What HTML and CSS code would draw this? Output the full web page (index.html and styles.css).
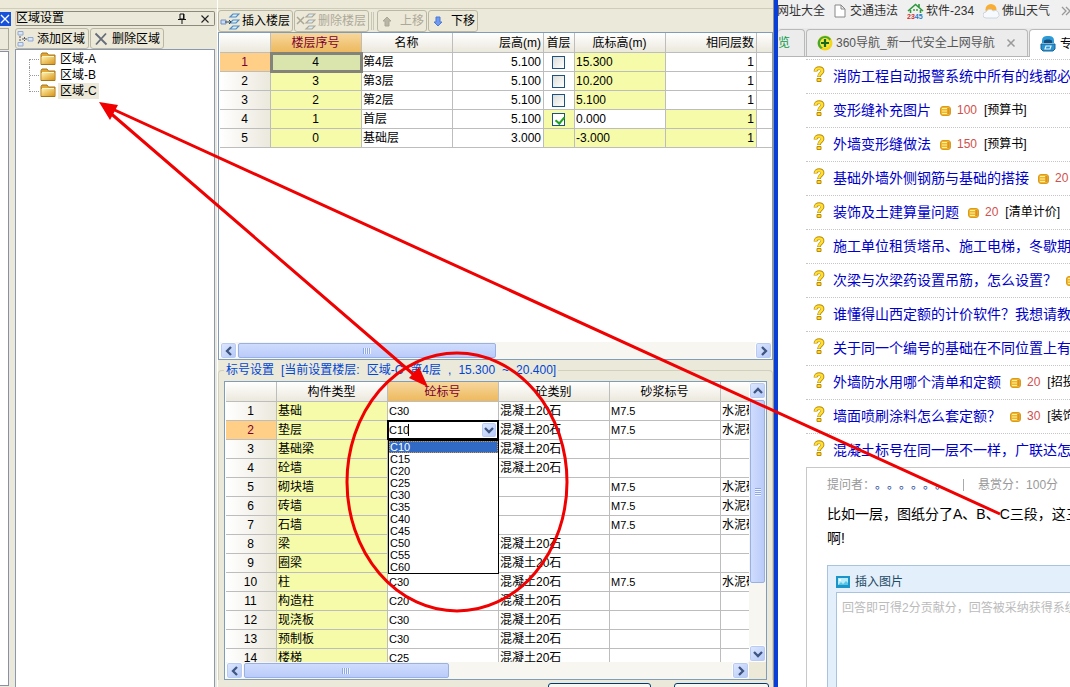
FILE: index.html
```
<!DOCTYPE html>
<html lang="zh-CN">
<head>
<meta charset="utf-8">
<title>区域设置</title>
<link rel="stylesheet" href="styles.css">
</head>
<body>
<svg class="defs" aria-hidden="true">
  <defs>
    <linearGradient id="gold" x1="0" y1="0" x2="1" y2="1"><stop offset="0" stop-color="#fff0a8"/><stop offset="1" stop-color="#d9961c"/></linearGradient>
    <symbol id="folder" viewBox="0 0 16 14"><path d="M1 12.500V2.500L2 1h5l1.500 2H15v9.500z" fill="#e2a737" stroke="#a87518"/><path d="M1.500 5h13v7h-13z" fill="url(#gold)"/><path d="M2 4.500h12" stroke="#fff6c8"/></symbol>
    <symbol id="quest" viewBox="0 0 12 17"><path d="M2.500 5.500C2.500 1 10 1 9.500 5c-.3 2.500-3.500 2.500-3.500 6" fill="none" stroke="#b98a10" stroke-width="3.800"/><path d="M2.500 5C2.500 1.500 9.700 1.500 9.300 5 9 7.500 6 7.500 6 10.500" fill="none" stroke="#ffe02e" stroke-width="2.300"/><path d="M4 12.500h4v3H4z" fill="#ffd820" stroke="#b98a10"/></symbol>
    <symbol id="coin" viewBox="0 0 11 10"><rect x=".5" y=".5" width="10" height="9" rx="2.500" fill="#f2b629" stroke="#d79a22"/><path d="M2 2.500h5M2 5h5M2 7.500h5" stroke="#fff09a"/><path d="M8.500 2v6" stroke="#dc9320" stroke-width="2"/></symbol>
    <symbol id="layers" viewBox="0 0 18 17"><path d="M8 4l3-3h6l-3 3zM8 10l3-3h6l-3 3zM8 16l3-3h6l-3 3z" fill="#d9ecfb" stroke="currentColor" stroke-width="1.200"/></symbol>
    <symbol id="chev" viewBox="0 0 10 10"><path d="M7 1L3 5l4 4" fill="none" stroke="#3f5582" stroke-width="2.300"/></symbol>
  </defs>
</svg>
<div class="desktop">
  <main class="app">
    <div class="strip">
      <button class="strip-close" aria-label="关闭"><svg viewBox="0 0 11 14" width="11" height="14"><path d="M1 3l8 8M9 3l-8 8" stroke="#fff" stroke-width="1.300"/></svg></button>
      <div class="strip-bar"></div>
      <div class="strip-body"></div>
    </div>

    <section class="zones">
      <header class="zones-title">
        <h1>区域设置</h1>
        <svg viewBox="0 0 10 12" width="10" height="12"><path d="M3 1h4v5H3zM1 6.500h8M5 7v4M6.500 1v5" fill="none" stroke="#111"/></svg>
        <svg viewBox="0 0 10 10" width="10" height="10"><path d="M1.500 1.500l7 7M8.500 1.500l-7 7" stroke="#222" stroke-width="1.100"/></svg>
      </header>
      <div class="tools zones-tools">
        <button class="tool"><svg viewBox="0 0 17 16" width="17" height="16"><path d="M1 2V.500h5V4H1zM1 11.500h5V15H1zM11 6.500h5V10h-5z" fill="#d7e6fb" stroke="#93a9cd"/><path d="M3 5v6M5 8h5M7.500 6v4" stroke="#556" stroke-dasharray="2 1"/></svg>添加区域</button>
        <button class="tool"><svg viewBox="0 0 14 14" width="14" height="14"><path d="M1.500 1.500l11 11M12 1.500L2 12.500" stroke="#666d79" stroke-width="1.800"/></svg>删除区域</button>
      </div>
      <ul class="tree">
        <li><svg width="16" height="14"><use href="#folder"/></svg><span>区域-A</span></li>
        <li><svg width="16" height="14"><use href="#folder"/></svg><span>区域-B</span></li>
        <li><svg width="16" height="14"><use href="#folder"/></svg><span class="picked">区域-C</span></li>
      </ul>
    </section>

    <section class="floors">
      <div class="tools floors-tools">
        <button class="tool"><svg class="blue" viewBox="0 0 20 17" width="20" height="17"><use href="#layers" x="2" width="18" height="17"/><path d="M1 7h5v4H1z" fill="#c9dcf5" stroke="#7590bd"/><path d="M5 9h6M9 7l2 2-2 2" fill="none" stroke="#345"/></svg>插入楼层</button>
        <button class="tool" disabled><svg viewBox="0 0 20 17" width="20" height="17"><use href="#layers" x="2" width="18" height="17"/><path d="M1 4l7 7M8 4l-7 7" stroke="#aaa797" stroke-width="1.500"/></svg>删除楼层</button>
        <span class="sep"></span>
        <button class="tool arrow" disabled><svg viewBox="0 0 10 11" width="10" height="11"><path d="M5 1l4 4H7v5H3V5H1z" fill="#b9b6a7" stroke="#aaa797"/></svg>上移</button>
        <button class="tool arrow"><svg viewBox="0 0 10 11" width="10" height="11"><path d="M5 10L1 6h2V1h4v5h2z" fill="#6f9af0" stroke="#4b79d8"/></svg>下移</button>
      </div>

      <div class="frame top-frame">
        <div class="scroller">
        <table class="grid">
          <colgroup><col class="c-id"><col class="c-m"><col class="c-m"><col class="c-m"><col class="c-s"><col class="c-m"><col class="c-m"><col></colgroup>
          <thead><tr><th></th><th class="hot">楼层序号</th><th>名称</th><th class="r">层高(m)</th><th>首层</th><th>底标高(m)</th><th class="r">相同层数</th><th></th></tr></thead>
          <tbody>
            <tr><th class="hot-row">1</th><td class="c y current">4</td><td>第4层</td><td class="r">5.100</td><td class="c"><input type="checkbox" aria-label="首层"></td><td class="y">15.300</td><td class="r">1</td><td></td></tr>
            <tr><th>2</th><td class="c y">3</td><td>第3层</td><td class="r">5.100</td><td class="c"><input type="checkbox" aria-label="首层"></td><td class="y">10.200</td><td class="r">1</td><td></td></tr>
            <tr><th>3</th><td class="c y">2</td><td>第2层</td><td class="r">5.100</td><td class="c"><input type="checkbox" aria-label="首层"></td><td class="y">5.100</td><td class="r">1</td><td></td></tr>
            <tr><th>4</th><td class="c y">1</td><td>首层</td><td class="r">5.100</td><td class="c y"><input type="checkbox" aria-label="首层" checked></td><td>0.000</td><td class="r y">1</td><td></td></tr>
            <tr><th>5</th><td class="c y">0</td><td>基础层</td><td class="r">3.000</td><td class="y"></td><td class="y">-3.000</td><td class="r y">1</td><td></td></tr>
          </tbody>
        </table>
        </div>
        <div class="hbar">
          <button class="sb" aria-label="向左"><svg width="10" height="10"><use href="#chev"/></svg></button>
          <div class="track"><div class="thumb half"></div></div>
          <button class="sb right" aria-label="向右"><svg width="10" height="10"><use href="#chev"/></svg></button>
        </div>
      </div>

      <fieldset class="marks">
        <legend><span>标号设置</span><span>[当前设置楼层:</span><span>区域-C</span><span>第4层</span><span>,</span><span>15.300</span><span>~</span><span>20.400]</span></legend>
        <div class="frame mark-frame">
          <div class="scroller">
          <table class="grid">
            <colgroup><col class="c-id"><col class="c-l"><col class="c-l"><col class="c-l"><col class="c-l"><col></colgroup>
            <thead><tr><th></th><th>构件类型</th><th class="hot">砼标号</th><th>砼类别</th><th>砂浆标号</th><th></th></tr></thead>
            <tbody>
              <tr><th>1</th><td class="y">基础</td><td class="k">C30</td><td>混凝土20石</td><td class="k">M7.5</td><td>水泥砂浆</td></tr>
              <tr><th class="hot-row">2</th><td class="y">垫层</td>
                <td class="edit">
                  <div class="combo">
                    <input type="text" value="C10" aria-label="砼标号"><i class="caret"></i>
                    <button class="sb down" aria-label="展开"><svg width="10" height="10"><use href="#chev"/></svg></button>
                    <ul class="options" role="listbox">
                      <li role="option" aria-selected="true">C10</li><li role="option">C15</li><li role="option">C20</li><li role="option">C25</li><li role="option">C30</li><li role="option">C35</li><li role="option">C40</li><li role="option">C45</li><li role="option">C50</li><li role="option">C55</li><li role="option">C60</li>
                    </ul>
                  </div>
                </td><td>混凝土20石</td><td class="k">M7.5</td><td>水泥砂浆</td></tr>
              <tr><th>3</th><td class="y">基础梁</td><td></td><td>混凝土20石</td><td></td><td></td></tr>
              <tr><th>4</th><td class="y">砼墙</td><td></td><td>混凝土20石</td><td></td><td></td></tr>
              <tr><th>5</th><td class="y">砌块墙</td><td></td><td></td><td class="k">M7.5</td><td>水泥砂浆</td></tr>
              <tr><th>6</th><td class="y">砖墙</td><td></td><td></td><td class="k">M7.5</td><td>水泥砂浆</td></tr>
              <tr><th>7</th><td class="y">石墙</td><td></td><td></td><td class="k">M7.5</td><td>水泥砂浆</td></tr>
              <tr><th>8</th><td class="y">梁</td><td></td><td>混凝土20石</td><td></td><td></td></tr>
              <tr><th>9</th><td class="y">圈梁</td><td></td><td>混凝土20石</td><td></td><td></td></tr>
              <tr><th>10</th><td class="y">柱</td><td class="k">C30</td><td>混凝土20石</td><td class="k">M7.5</td><td>水泥砂浆</td></tr>
              <tr><th>11</th><td class="y">构造柱</td><td class="k">C20</td><td>混凝土20石</td><td></td><td></td></tr>
              <tr><th>12</th><td class="y">现浇板</td><td class="k">C30</td><td>混凝土20石</td><td></td><td></td></tr>
              <tr><th>13</th><td class="y">预制板</td><td class="k">C30</td><td>混凝土20石</td><td></td><td></td></tr>
              <tr><th>14</th><td class="y">楼梯</td><td class="k">C25</td><td>混凝土20石</td><td></td><td></td></tr>
            </tbody>
          </table>
          </div>
          <div class="vbar">
            <button class="sb up" aria-label="向上"><svg width="10" height="10"><use href="#chev"/></svg></button>
            <div class="track"><div class="thumb tall"></div></div>
            <button class="sb down" aria-label="向下"><svg width="10" height="10"><use href="#chev"/></svg></button>
          </div>
          <div class="hbar">
            <button class="sb" aria-label="向左"><svg width="10" height="10"><use href="#chev"/></svg></button>
            <div class="track"><div class="thumb short"></div></div>
            <button class="sb right" aria-label="向右"><svg width="10" height="10"><use href="#chev"/></svg></button>
          </div>
          <div class="corner"></div>
        </div>
      </fieldset>
      <div class="dialog-buttons"><button></button><button></button></div>
    </section>
  </main>

  <aside class="browser">
    <nav class="bookmarks">
      <a href="#">网址大全</a>
      <a href="#"><svg viewBox="0 0 12 14" width="12" height="14"><path d="M1 1h6l4 4v8H1zM7 1v4h4" fill="#fff" stroke="#888"/></svg>交通违法</a>
      <a href="#"><svg viewBox="0 0 17 16" width="17" height="16"><path d="M1 8l7.500-6.500L16 8M3.500 7v3M13.500 7v3M12 1v3" fill="none" stroke="#2d9a3c" stroke-width="1.600"/><path d="M6 6h2v2H6zM9 6h2v2H9z" fill="#6cb66f"/><text x="0" y="16" font-size="7" font-weight="700" fill="#c33">23<tspan fill="#287cc0">45</tspan></text></svg>软件-234</a>
      <a href="#"><svg viewBox="0 0 17 16" width="17" height="16"><circle cx="8" cy="6.500" r="5.500" fill="#f9ad32"/><path d="M3 15a3 3 0 010-6 4 4 0 017-1 3.500 3.500 0 014 7z" fill="#f7fafd" stroke="#cdd6df"/></svg>佛山天气</a>
      <svg class="more" viewBox="0 0 10 10" width="10" height="10"><path d="M1 1l4 4-4 4M5 1l4 4-4 4" fill="none" stroke="#999" stroke-width="1.300"/></svg>
    </nav>
    <div class="tabs">
      <div class="tab tab-cut">览</div>
      <div class="tab tab-nav"><svg viewBox="0 0 16 16" width="16" height="16"><circle cx="8" cy="8" r="7.500" fill="#f3d51b"/><path d="M1 6a7.500 7.500 0 0113-2L4 14a7.500 7.500 0 01-3-8z" fill="#46a832"/><circle cx="8" cy="8" r="5" fill="#f8e53a"/><path d="M8 4v8M4 8h8" stroke="#176b1f" stroke-width="2.200"/></svg><span>360导航_新一代安全上网导航</span><svg class="x" viewBox="0 0 10 10" width="10" height="10"><path d="M1.500 1.500l7 7M8.500 1.500l-7 7" stroke="#999" stroke-width="1.500"/></svg></div>
      <div class="tab tab-on"><svg viewBox="0 0 16 17" width="16" height="17"><path d="M2 6C2 2 4 1 8 1s6 1 6 5v2H2z" fill="#2f9bd6"/><path d="M4 6c0-2 8-2 8 0v2H4z" fill="#12507f"/><path d="M1 9h14v5l-2 2H3l-2-2z" fill="#2b93d0" stroke="#14639b"/><path d="M6 11h5l-1 3H5z" fill="none" stroke="#e3f5ff" stroke-width="1.200"/></svg><span>专业</span></div>
    </div>
    <ul class="questions">
      <li><svg class="q"><use href="#quest"/></svg><a href="#">消防工程自动报警系统中所有的线都必须</a></li>
      <li><svg class="q"><use href="#quest"/></svg><a href="#">变形缝补充图片</a><svg class="coin"><use href="#coin"/></svg><b>100</b><span>[预算书]</span></li>
      <li><svg class="q"><use href="#quest"/></svg><a href="#">外墙变形缝做法</a><svg class="coin"><use href="#coin"/></svg><b>150</b><span>[预算书]</span></li>
      <li><svg class="q"><use href="#quest"/></svg><a href="#">基础外墙外侧钢筋与基础的搭接</a><svg class="coin"><use href="#coin"/></svg><b>20</b></li>
      <li><svg class="q"><use href="#quest"/></svg><a href="#">装饰及土建算量问题</a><svg class="coin"><use href="#coin"/></svg><b>20</b><span>[清单计价]</span></li>
      <li><svg class="q"><use href="#quest"/></svg><a href="#">施工单位租赁塔吊、施工电梯，冬歇期</a></li>
      <li><svg class="q"><use href="#quest"/></svg><a href="#">次梁与次梁药设置吊筋，怎么设置？</a><svg class="coin"><use href="#coin"/></svg></li>
      <li><svg class="q"><use href="#quest"/></svg><a href="#">谁懂得山西定额的计价软件？我想请教</a></li>
      <li><svg class="q"><use href="#quest"/></svg><a href="#">关于同一个编号的基础在不同位置上有</a></li>
      <li><svg class="q"><use href="#quest"/></svg><a href="#">外墙防水用哪个清单和定额</a><svg class="coin"><use href="#coin"/></svg><b>20</b><span>[招投标]</span></li>
      <li><svg class="q"><use href="#quest"/></svg><a href="#">墙面喷刷涂料怎么套定额？</a><svg class="coin"><use href="#coin"/></svg><b>30</b><span>[装饰]</span></li>
      <li><svg class="q"><use href="#quest"/></svg><a href="#">混凝土标号在同一层不一样，广联达怎</a></li>
    </ul>
    <article class="post">
      <p class="meta"><span>提问者：<a href="#">。。。。。。</a></span><i></i><span>悬赏分：100分</span></p>
      <p class="body">比如一层，图纸分了A、B、C三段，这三<br>啊!</p>
      <div class="editor">
        <button class="insert"><svg viewBox="0 0 14 12" width="14" height="12"><path d="M0 0h14v12H0z" fill="#1b95c9"/><path d="M2 2h10v7H2z" fill="#b9ecfa"/><path d="M2 9l3-3 2 2 3-3 2 2v2z" fill="#58c7e6"/><circle cx="4" cy="4" r="1" fill="#fff"/></svg>插入图片</button>
        <textarea aria-label="回答" placeholder="回答即可得2分贡献分，回答被采纳获得系统奖励"></textarea>
      </div>
    </article>
  </aside>

  <svg class="notes" viewBox="0 0 1070 687" aria-hidden="true">
    <g fill="none" stroke="#f00000" stroke-width="3"><path d="M108 107L1000 514M108 111L420 380"/><ellipse cx="457" cy="482" rx="110" ry="129"/></g>
    <path d="M99 102l19 3-8 15zM428 387l-19-9 10-11z" fill="#f00000"/>
  </svg>
</div>
</body>
</html>
```
FILE: styles.css
```
* { box-sizing: border-box; }
body {
  margin: 0;
  overflow: hidden;
  font: 12px/16px "Liberation Sans", "Noto Sans CJK SC", sans-serif;
  text-spacing-trim: space-all;
  color: #000;
  background: #fff;
}
button, input, textarea { font: inherit; color: inherit; }
button { padding: 0; }
ul, p, h1 { margin: 0; padding: 0; }
ul { list-style: none; }
a { text-decoration: none; color: inherit; }
svg { flex: none; }
.defs { position: absolute; width: 0; height: 0; }
.desktop {
  position: relative;
  display: grid;
  grid-template-columns: minmax(0, 778fr) minmax(0, 292fr);
  height: 100vh;
  overflow: hidden;
}
.app {
  z-index: 1;
  display: grid;
  grid-template-columns: 11px 200px minmax(0, 1fr);
  column-gap: 4px;
  min-height: 0;
  background: linear-gradient(#ece9d8 8px, #cfccba 8px, #cfccba 9px, #ebe9da 9px);
  border-right: 4px solid #0a3fd6;
  box-shadow: inset -1px 0 #8f9297;
}

/* clipped neighbour panel */
.strip { display: flex; flex-direction: column; padding-top: 12px; }
.strip-close { width: 11px; height: 14px; border: 0; background: #1752d8; }
.strip-close svg { display: block; }
.strip-bar { height: 22px; margin: 2px 2px 0 0; border: 1px solid #aca899; border-left: 0; }
.strip-body { flex: 1; margin: 1px 2px 1px 0; background: #fff; border: 1px solid #8a8dab; border-left: 0; }

/* region panel */
.zones { display: flex; flex-direction: column; padding-top: 11px; min-height: 0; }
.zones-title {
  display: flex;
  align-items: center;
  gap: 13px;
  height: 15px;
  padding-right: 4px;
  border: 1px solid #8d8a7c;
  border-left-color: #d4d0c0;
  border-radius: 2px;
}
.zones-title h1 { flex: 1; font-size: 12px; font-weight: 400; line-height: 13px; }
.tools { display: flex; }
.tool {
  display: flex;
  align-items: center;
  gap: 3px;
  height: 21px;
  border: 1px solid #bab7a5;
  border-radius: 3px;
  background: #ece9d8;
  padding: 0 3px;
  white-space: nowrap;
}
.tool:disabled { color: #aca899; }
.zones-tools { padding: 2px 0 0; gap: 1px; }
.zones-tools .tool:first-child { padding-left: 1px; }
.zones-tools .tool:last-child { gap: 4px; }
.tree { flex: 1; padding: 1px 0 0 13px; background: #fff; border: 1px solid #8a98b0; border-bottom: 0; }
.tree li { display: flex; align-items: center; height: 16px; }
.tree li::before { content: ""; width: 10px; height: 16px; border-left: 1px dotted #999; background: repeating-linear-gradient(90deg, #999 0 1px, transparent 1px 2px) 0 8px / 100% 1px no-repeat; }
.tree li:first-child::before { height: 8px; align-self: flex-end; background-position: 0 0; }
.tree li:last-child::before { height: 9px; align-self: flex-start; }
.tree span { margin-left: 2px; padding: 0 2px; }
.tree .picked { background: #ece9d8; }

/* floors */
.floors { display: flex; flex-direction: column; min-height: 0; padding-right: 1px; margin-left: -2px; border-left: 1px solid #fff; }
.floors-tools { height: 32px; padding: 10px 0 0; }
.floors-tools .tool { gap: 2px; height: 22px; padding: 0 2px 0 1px; margin-right: 1px; }
.floors-tools .arrow { gap: 8px; padding: 0 2px 0 4px; }
.blue { color: #4f8bc4; }
.sep { width: 3px; margin: 2px 3px 2px 1px; border: solid #c9c6b4; border-width: 0 1px; }
.frame { background: #fff; border: 1px solid #7f9db9; }
.top-frame { display: flex; flex-direction: column; flex: 326 1 0; min-height: 0; padding-left: 1px; }
.scroller { flex: 1; min-width: 0; min-height: 0; overflow: hidden; }
.grid { width: 100%; table-layout: fixed; border-spacing: 0; }
.c-id { width: 51px; }
.c-m { width: 91px; }
.c-s { width: 31px; }
.c-l { width: 111px; }
.grid th, .grid td {
  height: 19px;
  padding: 0 2px 0 1px;
  line-height: 18px;
  text-align: left;
  font-weight: 400;
  white-space: nowrap;
  overflow: hidden;
  border: solid #bdbdbd;
  border-width: 0 1px 1px 0;
}
.grid th { text-align: center; background: linear-gradient(90deg, #fff, #ebe8dd); }
.grid thead th { height: 20px; background: linear-gradient(#fff, #ebe8dc); }
.grid tr > :last-child { border-right: 0; }
.grid .r { text-align: right; }
.grid .c { text-align: center; }
.grid .y { background: #f5fba8; }
.grid thead .hot { color: #7b0032; background: linear-gradient(#f7d79d, #edb95d); }
.grid .hot-row { color: #7b0032; background: #ffcf87; }
.grid .current { background: #d9e5ad; outline: 3px solid #83837a; outline-offset: -2px; }
.grid .k { font-size: 11px; }
.grid input[type="checkbox"] {
  appearance: none;
  display: block;
  width: 13px;
  height: 13px;
  margin: 1px auto 0;
  border: 1px solid #1c5180;
  background: linear-gradient(135deg, #dcdcd7, #fff);
}
.grid input[type="checkbox"]:checked { background: #fff; position: relative; }
.grid input:checked::after { content: ""; position: absolute; left: 4px; top: 1px; width: 4px; height: 7px; border: solid #21a121; border-width: 0 2px 2px 0; transform: rotate(40deg); }

/* scroll bars */
.hbar { display: flex; height: 17px; background: #f7f6f0; }
.vbar { display: flex; flex-direction: column; background: #f7f6f0; }
.track { flex: 1; min-height: 0; min-width: 0; padding: 1px; }
.sb {
  display: grid;
  place-items: center;
  flex: none;
  width: 17px;
  height: 17px;
  border: 1px solid #fff;
  border-radius: 3px;
  background: linear-gradient(135deg, #dfe9ff, #b4c8f6);
  box-shadow: inset 0 0 0 1px #b9caf3;
}
.sb.right svg { transform: rotate(180deg); }
.sb.up svg { transform: rotate(90deg); }
.sb.down svg { transform: rotate(-90deg); }
.thumb { display: grid; place-items: center; height: 100%; border: 1px solid #98b0e4; border-radius: 2px; background: linear-gradient(#cfdcfd, #bacbf9); }
.thumb::after { content: ""; width: 8px; height: 6px; background: repeating-linear-gradient(90deg, #8ca8e8 0 1px, #eef3ff 1px 2px); }
.half { width: 50%; }
.short { width: 42%; }
.tall { width: 100%; height: 75%; background: linear-gradient(90deg, #cfdcfd, #bacbf9); }
.tall::after { width: 6px; height: 8px; background: repeating-linear-gradient(#8ca8e8 0 1px, #eef3ff 1px 2px); }

/* marks */
.marks {
  display: flex;
  flex: 312 1 0;
  min-width: 0;
  min-height: 0;
  margin: 3px 0 0;
  padding: 4px 5px 0 5px;
  border: 1px solid #d0d0bf;
  border-bottom: 0;
  border-radius: 4px 4px 0 0;
}
.marks legend { display: flex; gap: 7px; height: 14px; padding: 0 2px; line-height: 14px; color: #0046d5; }
.mark-frame { flex: 1; display: grid; grid-template-columns: minmax(0, 1fr) 17px; grid-template-rows: minmax(0, 1fr) 17px; min-width: 0; min-height: 0; padding-left: 1px; }
.corner { background: #ece9d8; }
.grid .edit { padding: 0; overflow: visible; }
.combo { position: relative; display: flex; align-items: center; height: 20px; margin: -1px; background: #fff; border: 2px solid #000; }
.combo input { width: 19px; min-width: 0; padding: 0; border: 0; outline: 0; font-size: 11px; height: 15px; background: none; }
.combo .caret { width: 1px; height: 12px; margin-right: auto; background: #000; }
.combo .sb { width: 16px; height: 16px; }
.options { position: absolute; z-index: 1; top: 18px; left: -1px; right: -2px; background: #fff; border: 1px solid #000; }
.options li { height: 12px; padding-left: 1px; font-size: 11px; line-height: 12px; }
.options [aria-selected] { color: #fff; background: #316ac5; outline: 1px dotted #d8953c; outline-offset: -1px; }
.dialog-buttons { display: flex; justify-content: flex-end; gap: 23px; height: 7px; padding: 3px 4px 0 0; overflow: hidden; }
.dialog-buttons button { flex: none; width: 103px; height: 23px; border: 1px solid #003c74; border-radius: 3px; background: #f8f7f1; }
.dialog-buttons button:last-child { width: 95px; }

/* browser */
.browser { display: flex; flex-direction: column; min-height: 0; overflow: hidden; white-space: nowrap; background: #fff; }
.bookmarks { display: flex; align-items: center; gap: 12px; height: 28px; padding-bottom: 6px; margin-left: -4px; padding-left: 3px; color: #333; background: #f0f0f0; }
.bookmarks a { display: flex; align-items: center; gap: 2px; }
.bookmarks a:nth-child(2) { gap: 4px; margin-left: -3px; }
.bookmarks a:nth-child(n+3) { margin-left: -3px; }
.bookmarks .more { margin-left: -1px; }
.tabs { display: flex; height: 29px; padding-top: 1px; background: #e9e9e9; border-bottom: 1px solid #b5b5b5; }
.tab { display: flex; align-items: center; flex: none; border: 1px solid #b9b9b9; border-bottom: 0; border-radius: 4px 4px 0 0; background: #ececec; color: #555; }
.tab-cut { width: 27px; color: #0d9a43; border-left: 0; }
.tab-nav { width: 222px; margin-left: 1px; padding: 0 11px 0 10px; gap: 3px; }
.tab-nav span { flex: 1; }
.tab-on { width: 60px; margin: 0 0 -1px 1px; padding-left: 10px; gap: 4px; background: #fff; color: #000; }
.questions { margin-left: 28px; padding-top: 2px; }
.questions li { display: flex; align-items: center; height: 34px; padding: 0 0 2px 7px; border-top: 1px dotted #c6c6c6; }
.questions a { margin-left: 8px; font-size: 14px; color: #00c; }
.q { width: 12px; height: 17px; margin-bottom: 3px; }
.coin { width: 11px; height: 10px; margin: 3px 6px 0 9px; }
.questions b { font-weight: 400; color: #d0504c; }
.questions span { margin-left: 7px; }
.post { flex: 1; display: flex; flex-direction: column; margin-left: 28px; padding: 9px 0 0 20px; border: 1px solid #c8c8c8; border-width: 1px 0 0 1px; }
.meta { display: flex; align-items: center; color: #999; }
.meta a { color: #223f9c; }
.meta i { width: 1px; height: 12px; margin: 0 14px 0 16px; background: #aaa; }
.post .body { margin-top: 9px; font-size: 14px; line-height: 24px; }
.editor { flex: 1; display: flex; flex-direction: column; margin-top: 15px; padding: 7px 0 0 8px; border: 1px solid #a9c3de; border-width: 1px 0 0 1px; background: #e3effb; }
.insert { display: flex; align-items: center; gap: 5px; height: 18px; border: 0; background: none; color: #234a63; }
.editor textarea { flex: 1; width: 100%; margin: 1px 0 0; padding: 7px 5px; border: 1px solid #a9c3de; border-width: 1px 0 0 1px; resize: none; overflow: hidden; white-space: pre; background: #fff; }
.editor textarea::placeholder { color: #bbb; }
.notes { position: absolute; z-index: 2; inset: 0; width: 100%; height: 100%; pointer-events: none; }
```
